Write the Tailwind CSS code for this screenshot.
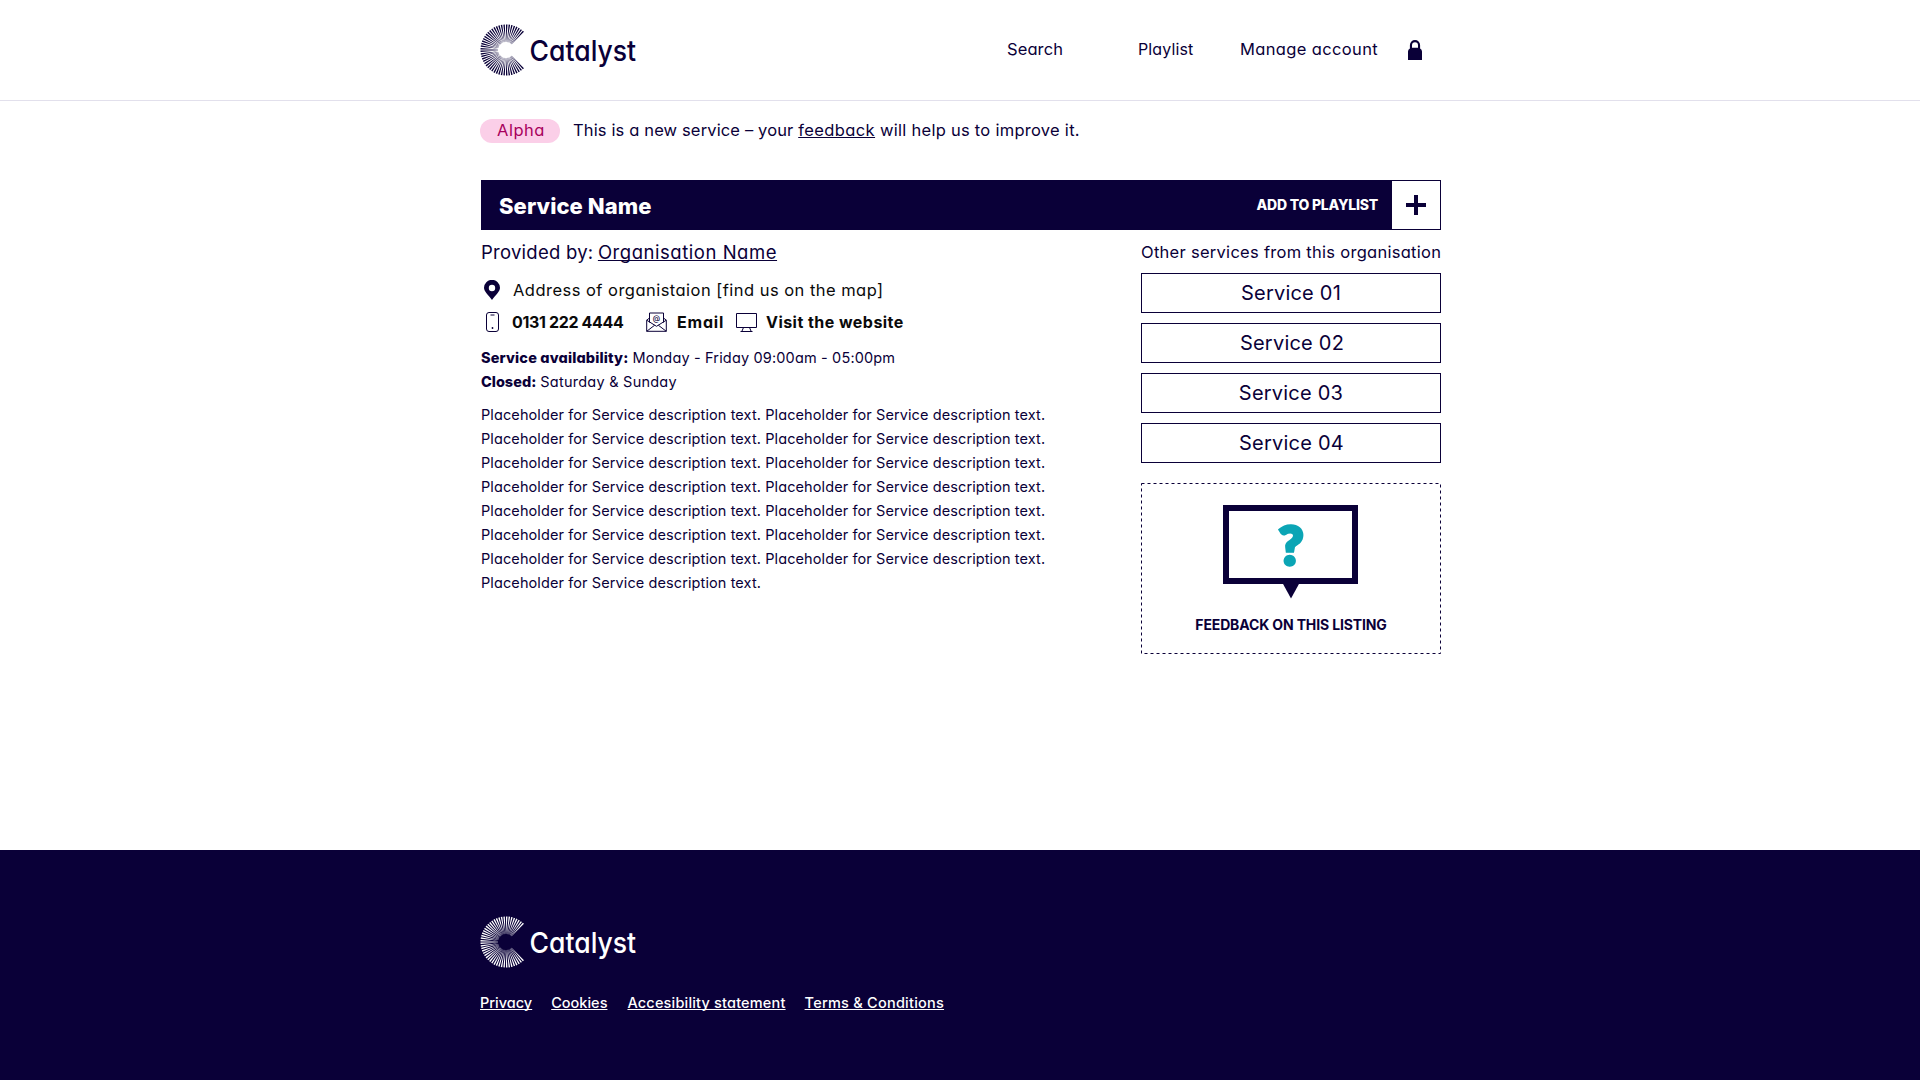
<!DOCTYPE html>
<html lang="en">
<head>
<meta charset="utf-8">
<title>Catalyst – Service Name</title>
<script src="https://cdn.jsdelivr.net/npm/@tailwindcss/browser@4"></script>
</head>
<body class="flex h-[1080px] flex-col overflow-hidden bg-white font-['Inter',sans-serif] text-[16.5px] leading-6 text-[#0a0038] [font-feature-settings:'cv11'] [text-decoration-skip-ink:none]">

<!-- Shared logo -->
<svg class="hidden">
  <symbol id="logo" viewBox="0 0 160 52">
    <path id="rays" fill="currentColor"/>
    <text x="49.6" y="36.700" font-size="29" font-weight="500" fill="currentColor" textLength="106.500" lengthAdjust="spacingAndGlyphs">Catalyst</text>
  </symbol>
</svg>
<script>
  // Tapered rays of the C, leaving the right side open
  let d = '';
  for (let i = 0; i <= 45; i++) {
    const a = (47 + i * 266 / 45) * Math.PI / 180, c = Math.cos(a), s = Math.sin(a);
    const p = (r, w) => (26 + r * c - w * s).toFixed(2) + ' ' + (26 + r * s + w * c).toFixed(2);
    d += `M${p(8, -.1)}L${p(14, -.28)}L${p(25.5, -.75)}L${p(25.5, .75)}L${p(14, .28)}L${p(8, .1)}Z`;
  }
  document.getElementById('rays').setAttribute('d', d);
</script>

<header class="h-[101px] shrink-0 border-b border-[#e2e0ec]">
  <div class="mx-auto flex h-[99px] w-[960px] items-center">
    <svg class="h-[52px] w-40"><use href="#logo"/></svg>
    <nav class="ml-auto flex items-center whitespace-nowrap pr-[18px]">
      <a class="w-[131px] pb-0.5 tracking-[0.1px]">Search</a>
      <a class="w-[102px] pb-0.5 text-base leading-6 tracking-[0.12px]">Playlist</a>
      <a class="w-[168px] pb-0.5 tracking-[0.36px]">Manage account</a>
      <svg class="h-5 w-3.5" viewBox="0 0 14 20"><path d="M0 20V11.5Q0 9.6 1.9 8.6V5.2a5.1 5.1 0 0 1 10.2 0v3.4Q14 9.6 14 11.5V20ZM4 7.8h6V5.2a3 3 0 0 0-6 0Z" fill="#0a0038" fill-rule="evenodd"/></svg>
    </nav>
  </div>
</header>

<main class="mx-auto w-[960px] grow pt-[18px]">
  <div class="flex h-6 items-center whitespace-nowrap">
    <span class="flex h-6 w-20 items-center justify-center rounded-full bg-[#fbcfe8] pb-0.5 pl-0.5 tracking-[0.53px] text-[#a8005c]">Alpha</span>
    <p class="ml-[13px] pb-0.5 tracking-[0.27px]"><span class="tracking-[0.14px]">This is a new service – your </span><a class="tracking-[0.4px] underline underline-offset-1">feedback</a> will help us to improve it.</p>
  </div>

  <div class="ml-px mt-[37px] w-[960px]">
    <div class="flex h-[50px] items-center border border-[#0a0038] bg-[#0a0038] text-white">
      <h1 class="ml-[17px] pt-0.5 text-[22px] font-extrabold tracking-[0.07px] [font-feature-settings:normal]">Service Name</h1>
      <span class="ml-auto mr-3.5 text-sm font-extrabold tracking-[-0.22px]">ADD TO PLAYLIST</span>
      <button class="flex h-12 w-12 items-center justify-center bg-white">
        <svg class="h-5 w-5" viewBox="0 0 20 20"><path d="M8 0h4v8h8v4h-8v8H8v-8H0V8h8z" fill="#0a0038"/></svg>
      </button>
    </div>

    <div class="flex justify-between">
      <section class="w-[600px] whitespace-nowrap pt-2.5">
        <p class="h-6 text-[18.5px] leading-6 tracking-[0.25px]">Provided by: <a class="-ml-px tracking-[0.54px] underline underline-offset-1">Organisation Name</a></p>

        <div class="mt-3.5 flex h-6 items-center pl-[3px] text-[#0a0a0a]">
          <svg class="h-5 w-4" viewBox="0 0 16 20"><path d="M8 20C4 14.5 0 11.5 0 7.8a8 8 0 0 1 16 0C16 11.500 12 14.500 8 20ZM8 4.800a3.200 3.200 0 1 0 0 6.400a3.200 3.200 0 0 0 0-6.400Z" fill="#0a0038" fill-rule="evenodd"/></svg>
          <span class="ml-[13px] tracking-[0.47px]">Address of organistaion [find us on the map]</span>
        </div>

        <div class="mt-2 flex h-6 items-center pl-[5px] text-base font-bold text-[#0a0a0a]">
          <svg class="h-5 w-[13px]" viewBox="0 0 13 20" fill="none" stroke="#0a0038"><rect x=".5" y=".5" width="12" height="19" rx="2.500"/><path d="M4.500 3h4"/><circle cx="6.500" cy="16" r=".9" fill="#0a0038" stroke="none"/></svg>
          <span class="ml-[13px] w-[134px] tracking-[-0.35px]">0131 222 4444</span>
          <svg class="h-5 w-[21px]" viewBox="0 0 21 20" fill="none" stroke="#0a0038"><path d="M3.500 6 .7 8.200v11.100h19.600V8.200L17.500 6M3.500 10.500V1h14v9.500M.7 8.200l9.800 6.100 9.800-6.100M.7 19.300l8-6.100M20.300 19.300l-8-6.100"/><text x="10.500" y="8.500" font-size="7.500" font-weight="500" text-anchor="middle" fill="#0a0038" stroke="none">@</text></svg>
          <span class="ml-2.5 w-[59px] tracking-[0.8px]">Email</span>
          <svg class="h-5 w-[21px]" viewBox="0 0 21 20" fill="none" stroke="#0a0038"><path d="M.5 1.500h20v14H.5zM7.500 15.500l-1.500 3.500M13.500 15.500l1.500 3.500M4.500 19.500h12"/></svg>
          <span class="ml-[9px] tracking-[0.46px]">Visit the website</span>
        </div>

        <p class="mt-3 text-[14.5px] leading-6"><b class="font-extrabold tracking-[0.15px]">Service availability:</b> <span class="tracking-[0.16px]">Monday - Friday 09:00am - 05:00pm</span></p>
        <p class="text-[14.5px] leading-6"><b class="font-extrabold">Closed:</b> <span class="tracking-[0.24px]">Saturday &amp; Sunday</span></p>

        <p class="mt-[9px] w-[575px] whitespace-normal text-[14.5px] leading-6 tracking-[0.1px]">Placeholder for Service description text. Placeholder for Service description text. Placeholder for Service description text. Placeholder for Service description text. Placeholder for Service description text. Placeholder for Service description text. Placeholder for Service description text. Placeholder for Service description text. Placeholder for Service description text. Placeholder for Service description text. Placeholder for Service description text. Placeholder for Service description text. Placeholder for Service description text. Placeholder for Service description text. Placeholder for Service description text.</p>
      </section>

      <aside class="w-[300px] pt-2.5">
        <h2 class="h-6 whitespace-nowrap leading-6 tracking-[0.28px]">Other services from this organisation</h2>
        <div class="mt-[9px] grid gap-2.5 text-center text-xl leading-[38px] tracking-[0.22px]">
          <a class="h-10 border border-[#0a0038]">Service 01</a>
          <a class="h-10 border border-[#0a0038] pl-0.5">Service 02</a>
          <a class="h-10 border border-[#0a0038]">Service 03</a>
          <a class="h-10 border border-[#0a0038] pl-px">Service 04</a>
        </div>
        <div class="relative mt-5 flex h-[171px] flex-col items-center pt-[22px]">
          <svg class="absolute inset-0 h-[171px] w-[300px]" fill="none" stroke="#0a0038"><rect x=".5" y=".5" width="299" height="170" stroke-dasharray="3 3"/></svg>
          <svg class="mr-px h-[94px] w-[135px]" viewBox="0 0 135 94"><path d="M3 3h129v73H3z" fill="none" stroke="#0a0038" stroke-width="6"/><path d="M59.500 78h17L68 93.500z" fill="#0a0038"/><text x="68" y="60" text-anchor="middle" font-family="Lato" font-weight="900" font-size="54" fill="#0ba5b5" stroke="#0ba5b5" stroke-width="3.500">?</text></svg>
          <span class="mt-4 text-sm leading-5 font-bold tracking-[-0.14px]">FEEDBACK ON THIS LISTING</span>
        </div>
      </aside>
    </div>
  </div>
</main>

<footer class="h-[230px] shrink-0 bg-[#0a0038] text-white">
  <div class="mx-auto w-[960px] pt-[66px]">
    <svg class="h-[52px] w-40"><use href="#logo"/></svg>
    <nav class="mt-[25px] flex whitespace-nowrap text-[14.5px] leading-5 font-medium">
      <a class="mr-[19px] underline underline-offset-1">Privacy</a>
      <a class="mr-5 underline underline-offset-1">Cookies</a>
      <a class="mr-[19px] tracking-[0.18px] underline underline-offset-1">Accesibility statement</a>
      <a class="tracking-[0.24px] underline underline-offset-1">Terms &amp; Conditions</a>
    </nav>
  </div>
</footer>
</body>
</html>
